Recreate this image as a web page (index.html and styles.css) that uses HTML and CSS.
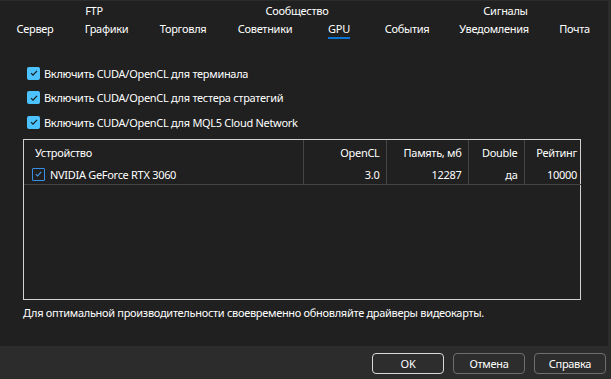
FILE: index.html
```html
<!DOCTYPE html>
<html lang="ru">
<head>
    <meta charset="UTF-8">
    <meta name="viewport" content="width=device-width, initial-scale=1.0">
    <title>Настройки — GPU</title>
    <link rel="stylesheet" href="styles.css">
</head>
<body>
    <div class="window">
        <!-- вкладки в две строки -->
        <div class="tabs">
            <div class="tab-row tab-row-top">
                <span class="tab tab-ftp">FTP</span>
                <span class="tab tab-community">Сообщество</span>
                <span class="tab tab-signals">Сигналы</span>
            </div>
            <div class="tab-row">
                <span class="tab w70">Сервер</span>
                <span class="tab w73">Графики</span>
                <span class="tab w80">Торговля</span>
                <span class="tab w84">Советники</span>
                <span class="tab w64 active"><span class="tab-text">GPU</span></span>
                <span class="tab w72">События</span>
                <span class="tab w102">Уведомления</span>
                <span class="tab w59">Почта</span>
            </div>
        </div>

        <div class="content">
            <div class="options">
                <label class="option"><span class="check filled"><svg viewBox="0 0 12 12"><path d="M3 6.2l2 2 4-4.4" /></svg></span>Включить CUDA/OpenCL для терминала</label>
                <label class="option"><span class="check filled"><svg viewBox="0 0 12 12"><path d="M3 6.2l2 2 4-4.4" /></svg></span>Включить CUDA/OpenCL для тестера стратегий</label>
                <label class="option"><span class="check filled"><svg viewBox="0 0 12 12"><path d="M3 6.2l2 2 4-4.4" /></svg></span>Включить CUDA/OpenCL для MQL5 Cloud Network</label>
            </div>

            <div class="devices">
                <table>
                    <colgroup>
                        <col class="c-name">
                        <col class="c-cl">
                        <col class="c-mem">
                        <col class="c-dbl">
                        <col class="c-rate">
                    </colgroup>
                    <thead>
                        <tr>
                            <th class="left">Устройство</th>
                            <th>OpenCL</th>
                            <th>Память, мб</th>
                            <th>Double</th>
                            <th>Рейтинг</th>
                        </tr>
                    </thead>
                    <tbody>
                        <tr>
                            <td class="left"><span class="device"><span class="check outline"><svg viewBox="0 0 12 12"><path d="M3 6.2l2 2 4-4.4" /></svg></span>NVIDIA GeForce RTX 3060</span></td>
                            <td>3.0</td>
                            <td>12287</td>
                            <td>да</td>
                            <td>10000</td>
                        </tr>
                    </tbody>
                </table>
            </div>

            <p class="hint">Для оптимальной производительности своевременно обновляйте драйверы видеокарты.</p>
        </div>

        <div class="buttons">
            <button class="btn default">OK</button>
            <button class="btn">Отмена</button>
            <button class="btn">Справка</button>
        </div>
    </div>
</body>
</html>
```

FILE: styles.css
```css
body {
    margin: 0;
    background: #202020;
    color: #ffffff;
    font-family: 'Noto Sans', 'Liberation Sans', sans-serif;
    font-size: 11px;
    letter-spacing: -0.3px;
}

.window {
    width: 608px;
    height: 378px;
    border-top: 1px solid #2b2b2b;
    border-right: 3px solid #2b2b2b;
    display: flex;
    flex-direction: column;
}

/* вкладки */
.tabs {
    height: 41px;
    padding-top: 1px;
    box-sizing: border-box;
}

.tab-row {
    display: flex;
    height: 18px;
    line-height: 18px;
}

.tab {
    text-align: center;
    white-space: nowrap;
}

.tab-ftp { margin-left: 70px; width: 48px; }
.tab-community { margin-left: 122px; width: 114px; }
.tab-signals { margin-left: 106px; width: 91px; }

.w70 { width: 70px; }
.w73 { width: 73px; }
.w80 { width: 80px; }
.w84 { width: 84px; }
.w64 { width: 64px; }
.w72 { width: 72px; }
.w102 { width: 102px; }
.w59 { width: 59px; }

.tab-text {
    display: inline-block;
}

.active .tab-text {
    border-bottom: 2px solid #0a74d6;
    line-height: 17px;
}

.content {
    flex: 1;
    padding: 19px 27px 0 23px;
}

/* флажки */
.options {
    padding-left: 4px;
}

.option {
    display: flex;
    align-items: center;
    height: 24.5px;
    gap: 4px;
}

.check {
    width: 13px;
    height: 13px;
    box-sizing: border-box;
    border-radius: 2px;
    display: inline-flex;
    align-items: center;
    justify-content: center;
    flex: 0 0 auto;
}

.check svg {
    width: 12px;
    height: 12px;
    fill: none;
    stroke-width: 1.2;
}

.check.filled {
    background: #4cc2ff;
}

.check.filled svg {
    stroke: #1a1a1a;
}

.check.outline {
    border: 1px solid #3a8ee6;
    border-radius: 1px;
}

.check.outline svg {
    stroke: #4aa0f0;
}

/* таблица устройств */
.devices {
    margin-top: 4px;
    height: 159px;
    border: 1px solid #d2d2d2;
}

table {
    width: 557px;
    border-collapse: collapse;
    table-layout: fixed;
}

.c-name { width: 279px; }
.c-cl { width: 83px; }
.c-mem { width: 82px; }
.c-dbl { width: 56px; }
.c-rate { width: 57px; }

th, td {
    font-weight: normal;
    text-align: right;
    padding: 3px 6px 0 0;
    height: 19px;
    white-space: nowrap;
    border-left: 1px solid #454545;
}

th:last-child, td:last-child {
    padding-right: 4px;
}

th.left, td.left {
    text-align: left;
    border-left: none;
    padding-left: 11px;
}

tbody td {
    border-bottom: 1px solid #454545;
}

td.left {
    padding-left: 8px;
}

.device {
    display: flex;
    align-items: center;
    gap: 5px;
}

.hint {
    margin: 5px 0 0;
}

/* нижняя панель */
.buttons {
    height: 33px;
    background: #2c2c2c;
    display: flex;
    justify-content: flex-end;
    align-items: flex-start;
    gap: 9px;
    padding: 7px 2px 0 0;
    box-sizing: border-box;
}

.btn {
    width: 72px;
    height: 21px;
    background: #2d2d2d;
    color: #ffffff;
    border: 1px solid #6e6e6e;
    border-radius: 4px;
    font-family: inherit;
    font-size: 11px;
    letter-spacing: -0.3px;
    padding: 0;
}

.btn.default {
    border-color: #d8d8d8;
}
```
